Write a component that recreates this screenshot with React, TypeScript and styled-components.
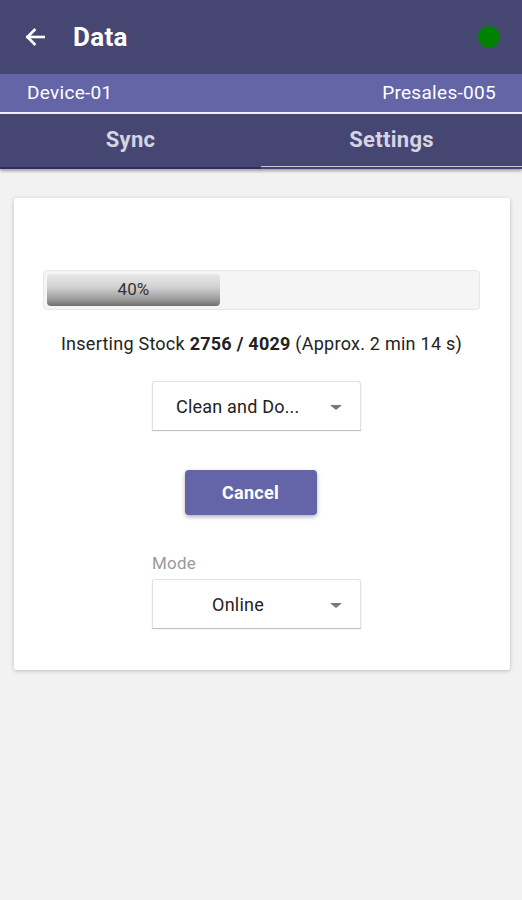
import styled, { createGlobalStyle } from 'styled-components';

const GlobalStyle = createGlobalStyle`
  html, body {
    margin: 0;
    padding: 0;
    background: #f2f2f2;
    font-family: Roboto, "Liberation Sans", sans-serif;
  }
  * { box-sizing: border-box; }
`;

export default function App() {
  return (
    <Page>
      <GlobalStyle />
      <TopBar>
        <BackButton aria-label="back">
          <svg width="26" height="26" viewBox="0 0 24 24" fill="none" stroke="#fff" strokeWidth="2.4" strokeLinecap="square">
            <path d="M20 12H5" />
            <path d="M11.5 5.5L5 12l6.5 6.5" />
          </svg>
        </BackButton>
        <Title>Data</Title>
        <StatusDot />
      </TopBar>
      <InfoBar>
        <span>Device-01</span>
        <span>Presales-005</span>
      </InfoBar>
      <Tabs>
        <Tab $active>Sync</Tab>
        <Tab>Settings</Tab>
      </Tabs>

      <Card>
        <Progress>
          <ProgressFill style={{ width: '40%' }}>40%</ProgressFill>
        </Progress>
        <StatusText>
          Inserting Stock <b>2756 / 4029</b> (Approx. 2 min 14 s)
        </StatusText>
        <Select>
          <SelectLabel>Clean and Do...</SelectLabel>
          <Caret />
        </Select>
        <CancelButton>Cancel</CancelButton>
        <Field>
          <FieldLabel>Mode</FieldLabel>
          <Select>
            <SelectLabel $centered>Online</SelectLabel>
            <Caret />
          </Select>
        </Field>
      </Card>
    </Page>
  );
}

const Page = styled.div`
  min-height: 900px;
  background: #f2f2f2;
`;

const TopBar = styled.header`
  height: 74px;
  background: #464672;
  display: flex;
  align-items: center;
  padding: 0 22px 0 21px;
  color: #fff;
`;

const BackButton = styled.div`
  width: 28px;
  height: 28px;
  display: flex;
  align-items: center;
  justify-content: center;
`;

const Title = styled.h1`
  margin: 0 0 0 24px;
  font-size: 26px;
  font-weight: 700;
  letter-spacing: 0.3px;
  flex: 1;
`;

const StatusDot = styled.div`
  width: 22px;
  height: 22px;
  border-radius: 50%;
  background: #008000;
`;

const InfoBar = styled.div`
  height: 40px;
  background: #6465a7;
  color: #fff;
  display: flex;
  align-items: center;
  justify-content: space-between;
  padding: 0 26px 2px 27px;
  font-size: 19px;
  letter-spacing: 0.3px;
  border-bottom: 2px solid #f4f4f8;
`;

const Tabs = styled.nav`
  display: flex;
  background: #464672;
  height: 55px;
  box-shadow: 0 2px 3px rgba(0, 0, 0, 0.35);
`;

const Tab = styled.div<{ $active?: boolean }>`
  flex: 1;
  display: flex;
  align-items: center;
  justify-content: center;
  font-size: 22px;
  font-weight: 700;
  letter-spacing: 0.3px;
  color: #d4d4e4;
  padding-bottom: 2px;
  border-bottom: 2px solid ${(p) => (p.$active ? '#2c2c66' : '#464672')};
  box-shadow: inset 0 -1px 0 ${(p) => (p.$active ? 'transparent' : '#c8c8d4')};
`;

const Card = styled.section`
  margin: 29px 12px 0 14px;
  background: #fff;
  border-radius: 3px;
  box-shadow: 0 1px 4px rgba(0, 0, 0, 0.22);
  height: 472px;
  padding: 72px 30px 0 29px;
  display: flex;
  flex-direction: column;
  align-items: center;
`;

const Progress = styled.div`
  width: 100%;
  height: 40px;
  background: #f5f5f5;
  border: 1px solid #e6e6e6;
  border-radius: 4px;
  padding: 3px 0 3px 3px;
  display: flex;
`;

const ProgressFill = styled.div`
  height: 100%;
  border-radius: 4px;
  background: linear-gradient(to bottom, #e9e9e9 0%, #d2d2d2 40%, #9a9a9a 80%, #6e6e6e 100%);
  color: #333;
  font-size: 17px;
  display: flex;
  align-items: center;
  justify-content: center;
  padding-bottom: 2px;
`;

const StatusText = styled.p`
  margin: 23px 0 0;
  font-size: 18px;
  letter-spacing: 0.25px;
  color: #222;
  b { font-weight: 700; }
`;

const Select = styled.div`
  margin: 27px 10px 0 0;
  width: 209px;
  height: 49px;
  background: #fff;
  border: 1px solid #e2e2e2;
  border-bottom: none;
  border-radius: 3px 3px 0 0;
  box-shadow: 0 1px 1px rgba(0, 0, 0, 0.28);
  display: flex;
  align-items: center;
  padding: 0 18px 0 23px;
  font-size: 18px;
  letter-spacing: 0.2px;
  color: #222;
`;

const SelectLabel = styled.span<{ $centered?: boolean }>`
  flex: 1;
  text-align: ${(p) => (p.$centered ? 'center' : 'left')};
  padding-right: ${(p) => (p.$centered ? '30px' : '0')};
`;

const Caret = styled.span`
  width: 0;
  height: 0;
  border-left: 6px solid transparent;
  border-right: 6px solid transparent;
  border-top: 5px solid #777;
  margin-top: 2px;
`;

const CancelButton = styled.button`
  margin: 40px 22px 0 0;
  width: 132px;
  height: 45px;
  border: none;
  border-radius: 4px;
  background: #6465a8;
  color: #fff;
  font-family: Roboto, "Liberation Sans", sans-serif;
  font-size: 18px;
  font-weight: 700;
  letter-spacing: 0.3px;
  box-shadow: 0 2px 4px rgba(0, 0, 0, 0.3);
`;

const Field = styled.div`
  margin: 38px 10px 0 0;
  display: flex;
  flex-direction: column;
  ${Select} {
    margin: 6px 0 0;
  }
`;

const FieldLabel = styled.label`
  font-size: 17px;
  letter-spacing: 0.2px;
  color: #9a9a9a;
`;
